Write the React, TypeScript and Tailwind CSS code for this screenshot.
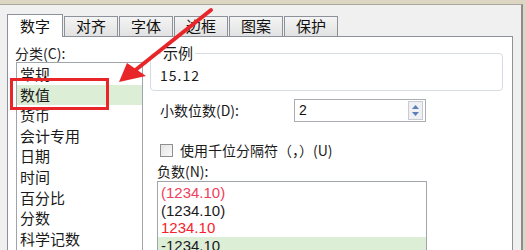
const cjk = { fontFamily: '"Noto Sans CJK SC", "Liberation Sans", sans-serif' };
const num = { fontFamily: '"Liberation Sans", "Noto Sans CJK SC", sans-serif' };

const tabs = ["对齐", "字体", "边框", "图案", "保护"];
const categories = ["常规", "数值", "货币", "会计专用", "日期", "时间", "百分比", "分数", "科学记数"];
const negatives = [
  { text: "(1234.10)", color: "text-[#f0405a]" },
  { text: "(1234.10)", color: "text-[#1a1a1a]" },
  { text: "1234.10", color: "text-[#f5222d]" },
  { text: "-1234.10", color: "text-[#1a1a1a]", active: true },
];

export default function App() {
  return (
    <div className="relative w-[526px] h-[250px] overflow-hidden bg-[#dcd6c2]" style={cjk}>
      <div className="mt-[4px] mr-[3px] h-[246px] border-t border-r-2 border-t-[#a9a7a0] border-r-[#8c8c8c] bg-[#f0f0f0] pl-[7px] pt-[9px]">
        {/* tab strip */}
        <div className="flex items-end h-[22px]">
          <div className="relative z-10 -mb-px w-[56px] h-[23px] bg-white border border-b-0 border-[#8d919a] flex items-center justify-center text-[15px] text-[#111]">
            数字
          </div>
          {tabs.map((t) => (
            <div
              key={t}
              className="ml-px w-[54px] h-[20px] border border-b-0 border-[#8d919a] bg-gradient-to-b from-[#f4f4f4] to-[#e2e2e2] flex items-center justify-center text-[15px] text-[#111]"
            >
              {t}
            </div>
          ))}
        </div>

        {/* panel */}
        <div className="w-[506px] h-[220px] bg-white border border-[#8d919a] flex">
          {/* left column */}
          <div className="w-[142px] pl-[7px] pt-[8px]">
            <div className="text-[14px] leading-[16px] text-[#222] h-[17px]">分类(C):</div>
            <div className="ml-[1px] w-[127px] h-[200px] border border-[#a0a4ab] pt-[1px] overflow-hidden">
              {categories.map((c) => (
                <div
                  key={c}
                  className={`h-[20.6px] leading-[20.6px] pl-[3px] text-[15px] text-[#1a1a1a] ${c === "数值" ? "bg-[#ddeed6]" : ""}`}
                >
                  {c}
                </div>
              ))}
            </div>
          </div>

          {/* right column */}
          <div className="flex-1 pt-[16px] pr-[9px]">
            <div className="relative h-[38px] rounded-[4px] border border-[#d3dde3]">
              <span className="absolute left-[10px] -top-[10px] bg-white px-[2px] text-[15px] leading-[18px] text-[#1a1a1a]">示例</span>
              <div className="pt-[12px] pl-[9px] text-[14px] leading-[18px] text-[#1a1a1a] tracking-[1px]">15.12</div>
            </div>

            <div className="mt-[8px] flex items-center pl-[10px] h-[23px]">
              <span className="w-[134px] text-[14px] text-[#1a1a1a]">小数位数(D):</span>
              <div className="w-[132px] h-[23px] border border-[#abadb3] flex items-center justify-between pl-[4px] pr-[2px]">
                <span className="text-[14px] text-[#111]" style={num}>2</span>
                <div className="w-[15px] h-[19px] border border-[#c8ccd2] bg-[#eef0f3] flex flex-col items-center justify-center gap-[3px]">
                  <svg width="7" height="4" viewBox="0 0 7 4"><path d="M3.5 0L7 4H0Z" fill="#5b7fb8" /></svg>
                  <svg width="7" height="4" viewBox="0 0 7 4"><path d="M0 0H7L3.5 4Z" fill="#5b7fb8" /></svg>
                </div>
              </div>
            </div>

            <div className="mt-[20px] flex items-center pl-[10px] h-[16px]">
              <div className="w-[13px] h-[13px] border border-[#8f8f8f] bg-gradient-to-br from-[#e4e4e4] to-[#fafafa]" />
              <span className="ml-[7px] text-[14px] text-[#1a1a1a]">使用千位分隔符（，）(U)</span>
            </div>

            <div className="mt-[5px] pl-[7px] text-[14px] leading-[17px] text-[#1a1a1a]">负数(N):</div>
            <div className="mt-[1px] ml-[7px] w-[270px] h-[80px] border border-[#a0a4ab] pt-[2px] overflow-hidden" style={num}>
              {negatives.map((n, i) => (
                <div
                  key={i}
                  className={`h-[17.5px] leading-[17.5px] pl-[3px] text-[15px] ${n.color} ${n.active ? "bg-[#ddeed6]" : ""}`}
                >
                  {n.text}
                </div>
              ))}
            </div>
          </div>
        </div>
      </div>

      {/* callout rectangle */}
      <div className="absolute left-[10px] top-[78px] w-[99px] h-[32px] border-[3px] border-[#e8262a]" />

      {/* callout arrow */}
      <svg className="absolute inset-0 pointer-events-none" width="526" height="250" viewBox="0 0 526 250">
        <line x1="211" y1="10" x2="133" y2="72" stroke="#e8262a" strokeWidth="4" strokeLinecap="round" />
        <path d="M119 82 L127 63 L146 76 Z" fill="#e8262a" />
      </svg>
    </div>
  );
}
